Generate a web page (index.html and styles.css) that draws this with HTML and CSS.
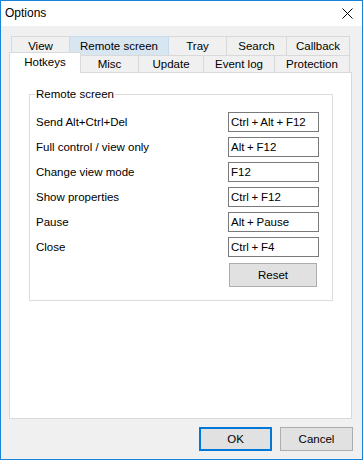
FILE: index.html
```html
<!DOCTYPE html>
<html lang="en">
<head>
  <meta charset="UTF-8" />
  <title>Options</title>
  <link rel="stylesheet" href="styles.css">
</head>
<body>
  <div class="window">
    <div class="titlebar">
      <span class="title">Options</span>
      <svg class="close" width="11" height="11" viewBox="0 0 11 11">
        <path d="M0.5 0.5 L10.5 10.5 M10.5 0.5 L0.5 10.5" stroke="#000" stroke-width="1" fill="none" />
      </svg>
    </div>

    <div class="body">
      <div class="tabs">
        <div class="tab-row back">
          <div class="tab" style="width: 59px;">View</div>
          <div class="tab hover" style="width: 100px;">Remote screen</div>
          <div class="tab" style="width: 59px;">Tray</div>
          <div class="tab" style="width: 61px;">Search</div>
          <div class="tab" style="width: 64px;">Callback</div>
        </div>
        <div class="tab-row front">
          <div class="tab selected" style="width: 72px;">Hotkeys</div>
          <div class="tab" style="width: 59px;">Misc</div>
          <div class="tab" style="width: 66px;">Update</div>
          <div class="tab" style="width: 72px;">Event log</div>
          <div class="tab" style="width: 76px;">Protection</div>
        </div>
      </div>

      <div class="panel">
        <fieldset class="group">
          <legend>Remote screen</legend>
          <div class="rows">
            <div class="row"><span>Send Alt+Ctrl+Del</span><div class="keybox">Ctrl + Alt + F12</div></div>
            <div class="row"><span>Full control / view only</span><div class="keybox">Alt + F12</div></div>
            <div class="row"><span>Change view mode</span><div class="keybox">F12</div></div>
            <div class="row"><span>Show properties</span><div class="keybox">Ctrl + F12</div></div>
            <div class="row"><span>Pause</span><div class="keybox">Alt + Pause</div></div>
            <div class="row"><span>Close</span><div class="keybox">Ctrl + F4</div></div>
          </div>
          <div class="reset-row">
            <button class="btn reset">Reset</button>
          </div>
        </fieldset>
      </div>

      <div class="buttons">
        <button class="btn default">OK</button>
        <button class="btn">Cancel</button>
      </div>
    </div>
  </div>
</body>
</html>
```

FILE: styles.css
```css
:root {
  --accent: #1883d7;
  --face: #f0f0f0;
  --line: #d9d9d9;
}

body {
  margin: 0;
  font-family: 'Liberation Sans', Arial, sans-serif;
  font-size: 11.5px;
  color: #000;
}

.window {
  width: 363px;
  height: 460px;
  box-sizing: border-box;
  border: 1px solid var(--accent);
  background: var(--face);
  display: flex;
  flex-direction: column;
}

.titlebar {
  height: 25px;
  background: #fff;
  display: flex;
  align-items: center;
  justify-content: space-between;
  padding: 0 9px 0 4px;
}

.title {
  font-size: 12px;
  margin-top: -1px;
}

.close {
  margin-top: -1px;
}

.body {
  flex: 1;
  padding: 10px 10px 0 8px;
  display: flex;
  flex-direction: column;
}

/* Tabs, two rows */
.tab-row {
  display: flex;
  align-items: flex-start;
}

.tab-row.back {
  height: 19px;
  padding-left: 2px;
}

.tab-row.front {
  height: 17px;
}

.tab {
  box-sizing: border-box;
  border: 1px solid var(--line);
  border-bottom: none;
  margin-left: -1px;
  display: flex;
  align-items: center;
  justify-content: center;
  background: var(--face);
}

.tab:first-child {
  margin-left: 0;
}

.back .tab {
  height: 19px;
  padding-bottom: 1px;
}

.front .tab {
  height: 17px;
}

.tab.hover {
  background: #d8e6f2;
  border-color: #c6dcee;
  position: relative;
}

.tab.selected {
  height: 21px;
  margin-top: -3px;
  margin-bottom: -1px;
  background: #fff;
  position: relative;
  z-index: 1;
  padding-bottom: 2px;
}

.panel {
  height: 347px;
  box-sizing: border-box;
  border: 1px solid var(--line);
  background: #fff;
  padding: 15px 18px 0 19px;
}

.group {
  margin: 0;
  border: 1px solid #dcdcdc;
  padding: 11px 13px 13px 6px;
}

.group legend {
  padding: 0 1px;
  margin-left: -1px;
  line-height: 13px;
}

.rows {
  display: flex;
  flex-direction: column;
  gap: 5px;
}

.row {
  display: flex;
  align-items: center;
  justify-content: space-between;
  height: 20px;
}

.keybox {
  box-sizing: border-box;
  width: 91px;
  height: 20px;
  border: 1px solid #7a7a7a;
  padding: 0 2px;
  line-height: 18px;
  white-space: nowrap;
  word-spacing: -0.5px;
}

.reset-row {
  display: flex;
  justify-content: flex-end;
  margin-top: 6px;
  padding-right: 2px;
}

.btn {
  box-sizing: border-box;
  height: 24px;
  width: 73px;
  background: #e1e1e1;
  border: 1px solid #adadad;
  font-family: inherit;
  font-size: 11.5px;
  color: #000;
  padding: 0;
}

.btn.reset {
  width: 88px;
}

.btn.default {
  border: 2px solid #0078d7;
}

.buttons {
  display: flex;
  justify-content: flex-end;
  gap: 8px;
  margin-top: 8px;
  margin-right: -1px;
}
```
